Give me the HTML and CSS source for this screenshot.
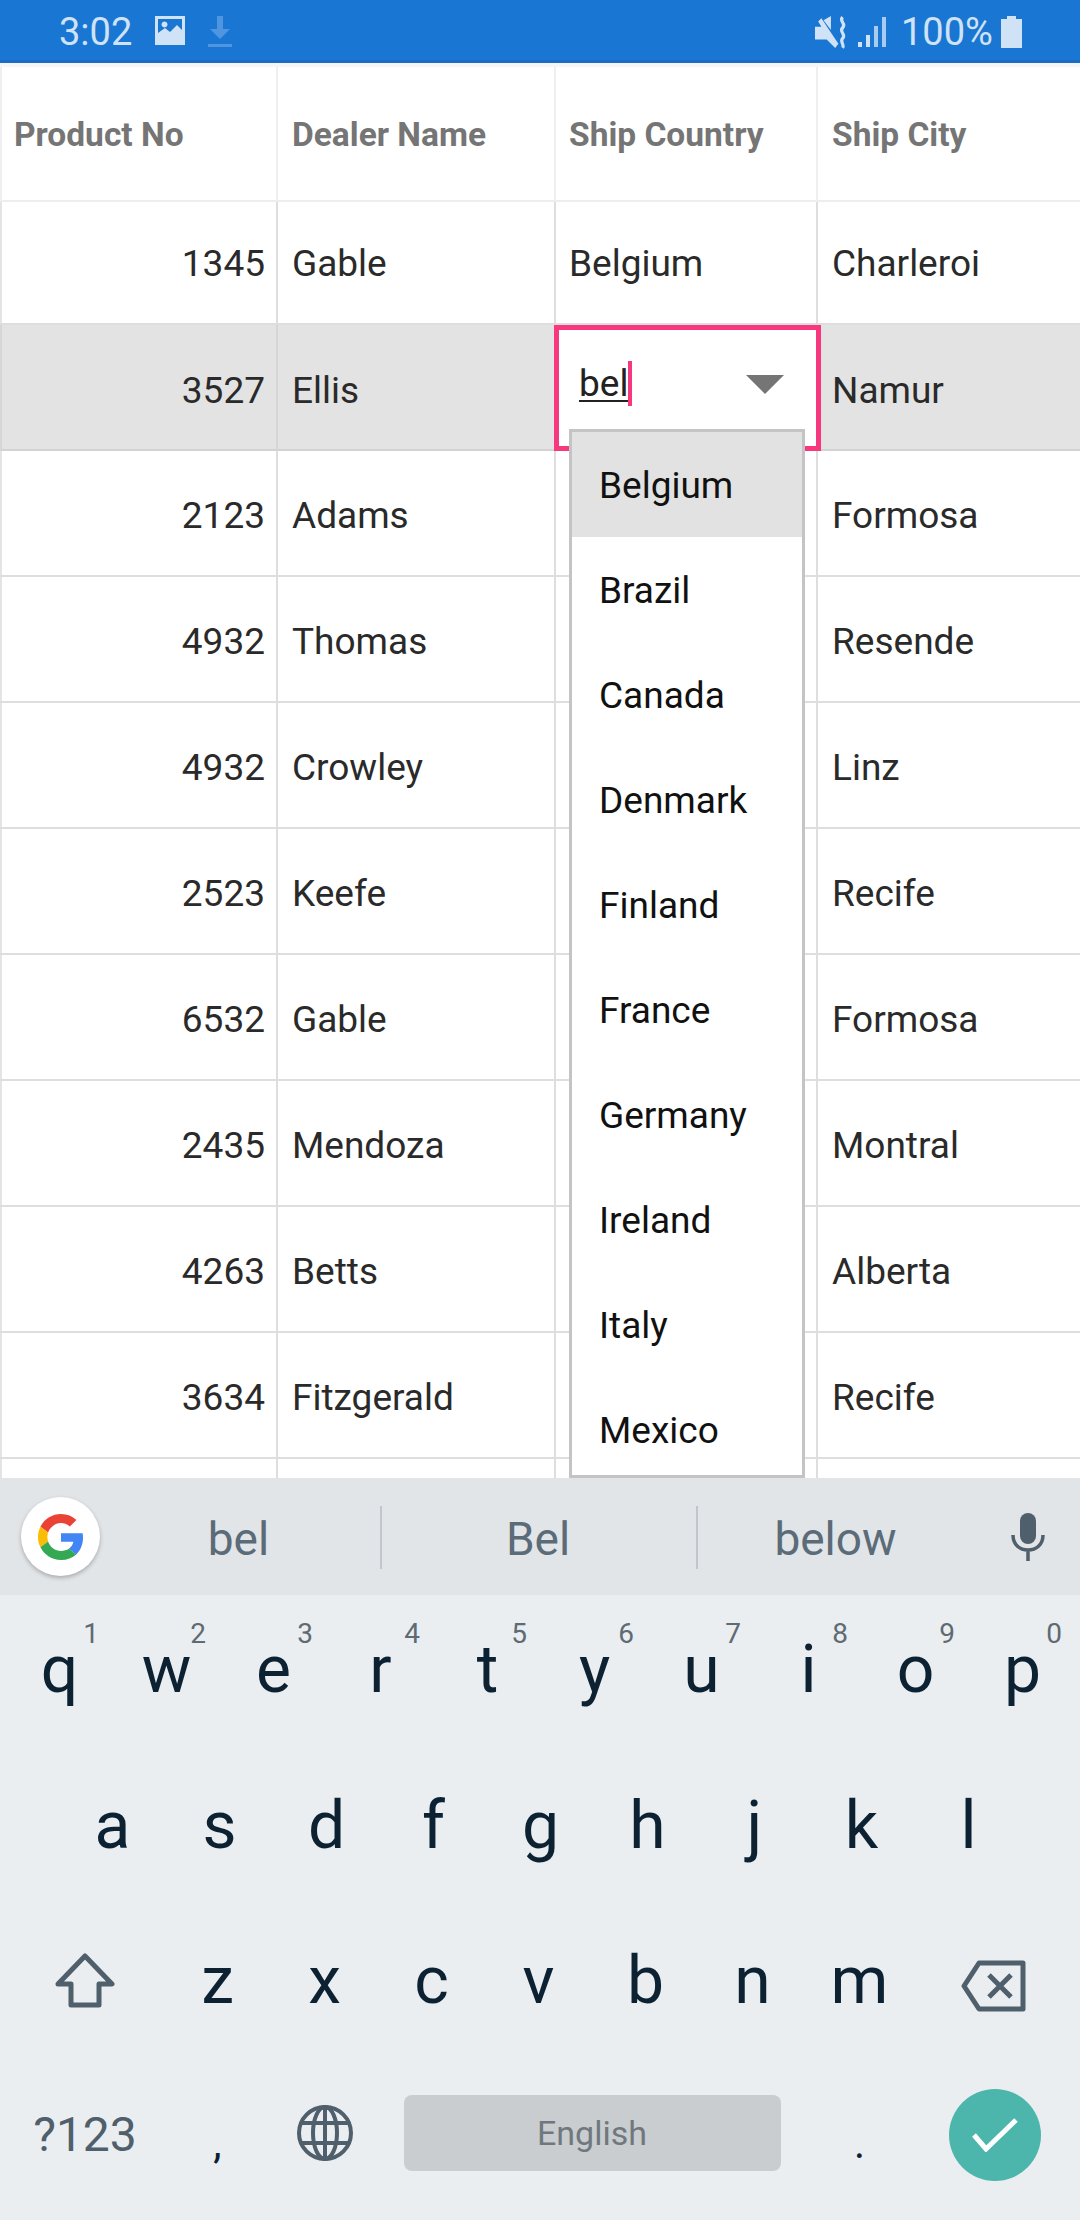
FILE: index.html
```html
<!DOCTYPE html>
<html lang="en">
<head>
<meta charset="utf-8">
<title>Data grid</title>
<link rel="stylesheet" href="styles.css">
</head>
<body>
<div class="page">
  <header class="status">
    <div class="status-left">
      <span class="clock">3:02</span>
      <svg class="ic-image" viewBox="0 0 30 29"><path fill="#cfe2f6" fill-rule="evenodd" d="M0 0H30V29H0ZM3 3V17L10 12L15 16L22 9L27 14V3ZM9.500 5.500A3 3 0 1 0 9.510 5.500Z"/></svg>
      <svg class="ic-download" viewBox="0 0 24 32"><path fill="#5095e0" d="M9 0H15V13H22L12 23L2 13H9ZM0 28H24V31H0Z"/></svg>
    </div>
    <div class="status-right">
      <svg class="ic-mute" viewBox="0 0 32 32"><path fill="#cfe2f6" d="M0 11H6L3 6L6 3L22 27L19 31L11 23H0ZM8 5L15 1V14Z"/><path fill="none" stroke="#cfe2f6" stroke-width="3" d="M26 2C22 6 30 8 26 12C22 16 30 18 26 22C23 25 28 28 26 31"/></svg>
      <svg class="ic-signal" viewBox="0 0 28 32"><path fill="#cfe2f6" d="M0 26H4V31H0ZM8 19H12V31H8Z"/><path fill="#a9cbef" d="M16 10H20V31H16ZM24 1H28V31H24Z"/></svg>
      <span class="pct">100%</span>
      <svg class="ic-battery" viewBox="0 0 21 32"><path fill="#cfe2f6" d="M6 0H15V3H21V32H0V3H6Z"/></svg>
    </div>
  </header>

  <main class="grid">
    <div class="row head">
      <div class="cell">Product No</div><div class="cell">Dealer Name</div><div class="cell">Ship Country</div><div class="cell">Ship City</div>
    </div>
    <div class="row first">
      <div class="cell num">1345</div><div class="cell">Gable</div><div class="cell">Belgium</div><div class="cell">Charleroi</div>
    </div>
    <div class="row selected">
      <div class="cell num">3527</div><div class="cell">Ellis</div>
      <div class="cell editor">
        <span class="typed">bel</span><span class="caret"></span>
        <svg class="arrow" viewBox="0 0 38 19"><path fill="#757575" d="M0 0H38L19 19Z"/></svg>
        <ul class="popup">
          <li class="active">Belgium</li><li>Brazil</li><li>Canada</li><li>Denmark</li><li>Finland</li><li>France</li><li>Germany</li><li>Ireland</li><li>Italy</li><li>Mexico</li>
        </ul>
      </div>
      <div class="cell">Namur</div>
    </div>
    <div class="row"><div class="cell num">2123</div><div class="cell">Adams</div><div class="cell"></div><div class="cell">Formosa</div></div>
    <div class="row"><div class="cell num">4932</div><div class="cell">Thomas</div><div class="cell"></div><div class="cell">Resende</div></div>
    <div class="row"><div class="cell num">4932</div><div class="cell">Crowley</div><div class="cell"></div><div class="cell">Linz</div></div>
    <div class="row"><div class="cell num">2523</div><div class="cell">Keefe</div><div class="cell"></div><div class="cell">Recife</div></div>
    <div class="row"><div class="cell num">6532</div><div class="cell">Gable</div><div class="cell"></div><div class="cell">Formosa</div></div>
    <div class="row"><div class="cell num">2435</div><div class="cell">Mendoza</div><div class="cell"></div><div class="cell">Montral</div></div>
    <div class="row"><div class="cell num">4263</div><div class="cell">Betts</div><div class="cell"></div><div class="cell">Alberta</div></div>
    <div class="row"><div class="cell num">3634</div><div class="cell">Fitzgerald</div><div class="cell"></div><div class="cell">Recife</div></div>
    <div class="row"><div class="cell"></div><div class="cell"></div><div class="cell"></div><div class="cell"></div></div>
  </main>

  <section class="keyboard">
    <div class="suggest">
      <div class="g-wrap">
        <div class="g-badge">
          <svg class="g-logo" viewBox="0 0 48 48">
            <path fill="#EA4335" d="M24 9.500c3.540 0 6.710 1.220 9.210 3.600l6.850-6.850C35.900 2.380 30.470 0 24 0 14.620 0 6.510 5.380 2.560 13.220l7.980 6.190C12.430 13.720 17.740 9.500 24 9.500z"/>
            <path fill="#4285F4" d="M46.980 24.550c0-1.570-.15-3.090-.38-4.550H24v9.020h12.940c-.58 2.960-2.260 5.480-4.780 7.180l7.730 6c4.510-4.180 7.090-10.360 7.090-17.650z"/>
            <path fill="#FBBC05" d="M10.530 28.590c-.48-1.450-.76-2.990-.76-4.590s.27-3.140.76-4.590l-7.980-6.190C.92 16.460 0 20.120 0 24c0 3.880.92 7.540 2.560 10.780l7.970-6.190z"/>
            <path fill="#34A853" d="M24 48c6.480 0 11.930-2.130 15.890-5.810l-7.730-6c-2.150 1.450-4.920 2.300-8.160 2.300-6.260 0-11.570-4.220-13.470-9.910l-7.980 6.190C6.510 42.620 14.620 48 24 48z"/>
          </svg>
        </div>
      </div>
      <div class="word">bel</div>
      <div class="word divided">Bel</div>
      <div class="word divided">below</div>
      <div class="mic-wrap">
        <svg class="mic" viewBox="0 0 34 48"><rect x="9" y="0" width="16" height="31" rx="8" fill="#4f5f6b"/><path fill="none" stroke="#4f5f6b" stroke-width="3.500" d="M2 22C2 32 9 37 17 37C25 37 32 32 32 22M17 37V48"/></svg>
      </div>
    </div>

    <div class="keys">
      <div class="key-row r1">
        <div class="key"><i class="hint">1</i>q</div><div class="key"><i class="hint">2</i>w</div><div class="key"><i class="hint">3</i>e</div><div class="key"><i class="hint">4</i>r</div><div class="key"><i class="hint">5</i>t</div><div class="key"><i class="hint">6</i>y</div><div class="key"><i class="hint">7</i>u</div><div class="key"><i class="hint">8</i>i</div><div class="key"><i class="hint">9</i>o</div><div class="key"><i class="hint">0</i>p</div>
      </div>
      <div class="key-row r2">
        <div class="key">a</div><div class="key">s</div><div class="key">d</div><div class="key">f</div><div class="key">g</div><div class="key">h</div><div class="key">j</div><div class="key">k</div><div class="key">l</div>
      </div>
      <div class="key-row r3">
        <div class="key wide-l"><svg class="ic-shift" viewBox="0 0 60 55"><path fill="none" stroke="#4f5f6b" stroke-width="5" stroke-linejoin="round" d="M30 3L57 31H44V52H16V31H3Z"/></svg></div>
        <div class="key">z</div><div class="key">x</div><div class="key">c</div><div class="key">v</div><div class="key">b</div><div class="key">n</div><div class="key">m</div>
        <div class="key wide-r back-key"><svg class="ic-back" viewBox="0 0 65 52"><path fill="none" stroke="#4f5f6b" stroke-width="5" stroke-linejoin="round" d="M18 3H62V49H18L3 26Z"/><path fill="none" stroke="#4f5f6b" stroke-width="5" d="M28 15L50 37M50 15L28 37"/></svg></div>
      </div>
      <div class="key-row r4">
        <div class="key wide-l sym">?123</div>
        <div class="key punct">,</div>
        <div class="key globe-key"><svg class="ic-globe" viewBox="0 0 56 56"><g fill="none" stroke="#4f5f6b" stroke-width="4"><circle cx="28" cy="28" r="26"/><ellipse cx="28" cy="28" rx="12" ry="26"/><path d="M5 18H51M5 38H51M28 2V54"/></g></svg></div>
        <div class="key space"><div class="spacebar">English</div></div>
        <div class="key punct">.</div>
        <div class="key wide-r enter-key"><div class="enter"><svg class="ic-check" viewBox="0 0 46 34"><path fill="none" stroke="#fff" stroke-width="5" d="M2 17L14 31L44 2"/></svg></div></div>
      </div>
    </div>
  </section>
</div>
</body>
</html>
```
FILE: styles.css
```css
* { box-sizing: border-box; }
html, body { margin: 0; padding: 0; }
body { width: 1080px; height: 2220px; overflow: hidden; background: #fff; font-family: Roboto, "Liberation Sans", sans-serif; }
.page { display: flex; flex-direction: column; height: 2220px; }

.status { flex: 0 0 63px; background: #1976d2; border-bottom: 3px solid #1a6cc4; padding-top: 4px; display: flex; justify-content: space-between; color: #cfe2f6; font-size: 38px; }
.status-left { display: flex; align-items: center; padding-left: 59px; }
.status-right { display: flex; align-items: center; padding-right: 58px; }
.clock { width: 96px; }
.ic-image { width: 30px; height: 29px; margin-bottom: 3px; }
.ic-download { width: 24px; height: 32px; margin-left: 23px; }
.ic-mute { width: 34px; height: 34px; }
.ic-signal { width: 28px; height: 32px; margin-left: 9px; }
.pct { margin-left: 15px; width: 100px; }
.ic-battery { width: 21px; height: 32px; }

.grid { flex: 1 1 0; min-height: 0; overflow: hidden; border-top: 4px solid #f6f6f6; position: relative; }
.row { display: grid; grid-template-columns: 278px 278px 262px 262px; height: 126px; border-bottom: 2px solid #dedede; color: #2a2a2a; font-size: 37px; }
.head { height: 135px; color: #757575; font-weight: 700; font-size: 33.500px; border-bottom-color: #eee; }
.first { height: 123px; }
.cell { display: flex; align-items: center; padding: 4px 13px 0 14px; border-right: 2px solid #dedede; }
.cell:nth-child(3) { padding-left: 13px; }
.cell:first-child { border-left: 2px solid #e4e4e4; padding-right: 11px; }
.cell:last-child { border-right: 0; }
.first .cell { padding-top: 2px; }
.head .cell { border-color: #efefef; padding-top: 2px; }
.head .cell:first-child { padding-left: 12px; }
.num { justify-content: flex-end; }
.selected { background: #e3e3e3; border-bottom-color: #d2d2d2; }
.selected .cell { border-color: #d6d6d6; }

.selected .cell.editor { position: relative; background: #fff; border: 5px solid #f7387e; height: 126px; margin: 0 -3px 0 -2px; padding: 0 0 9px 20px; z-index: 2; align-items: center; }
.typed { text-decoration: underline; text-underline-offset: 4px; text-decoration-thickness: 2px; color: #222; }
.caret { width: 4px; height: 45px; background: #f7387e; }
.arrow { position: absolute; right: 32px; top: 45px; width: 38px; height: 19px; }

.popup { position: absolute; left: 10px; top: 99px; width: 236px; height: 1049px; margin: 0; padding: 0; list-style: none; background: #fff; border: 3px solid #c4c4c4; overflow: hidden; font-size: 37px; color: #111; z-index: 3; }
.popup li { height: 105px; line-height: 107px; padding-left: 27px; }
.popup .active { background: #e2e2e2; }

.keyboard { flex: 0 0 742px; background: #eaeef1; display: flex; flex-direction: column; }
.suggest { flex: 0 0 117px; background: #e1e5e8; display: grid; grid-template-columns: 97px 283px 316px 279px 105px; align-items: center; color: #5b6b78; font-size: 46px; }
.g-wrap { padding-left: 21px; }
.g-badge { width: 79px; height: 79px; border-radius: 50%; background: #fff; box-shadow: 0 2px 4px rgba(0,0,0,.25); display: flex; align-items: center; justify-content: center; }
.g-logo { width: 46px; height: 46px; }
.word { text-align: center; position: relative; padding-top: 4px; }
.divided::before { content: ""; position: absolute; left: 0; top: -2px; height: 63px; width: 2px; background: #c0c6cb; }
.mic-wrap { display: flex; justify-content: center; }
.mic { width: 34px; height: 48px; }

.keys { padding: 0 6px; }
.key-row { display: flex; height: 155px; color: #0c2233; font-size: 66px; }
.r2 { padding-left: 53px; }
.key { position: relative; flex: 0 0 107px; display: flex; align-items: center; justify-content: center; padding-bottom: 4px; }
.r1 .key { padding-bottom: 6px; }
.wide-l { flex-basis: 158px; }
.wide-r { flex-basis: 161px; }
.hint { position: absolute; right: 14px; top: 22px; font-style: normal; font-size: 28px; color: #5f6a72; }
.sym { font-size: 48px; color: #4f5f6b; padding-bottom: 7px; }
.punct { font-size: 42px; padding: 12px 0 0; }
.globe-key { padding-bottom: 10px; }
.back-key { padding: 6px 0 0; }
.space { flex-basis: 428px; padding-bottom: 10px; }
.spacebar { width: 377px; height: 76px; border-radius: 8px; background: #c9cdd0; display: flex; align-items: center; justify-content: center; font-size: 34px; color: #70787e; }
.enter-key { padding: 0 0 5px 2px; }
.enter { width: 92px; height: 92px; border-radius: 50%; background: #4db6ac; display: flex; align-items: center; justify-content: center; }
.ic-shift { width: 60px; height: 55px; }
.ic-back { width: 65px; height: 52px; }
.ic-globe { width: 56px; height: 56px; }
.ic-check { width: 46px; height: 34px; }
```
